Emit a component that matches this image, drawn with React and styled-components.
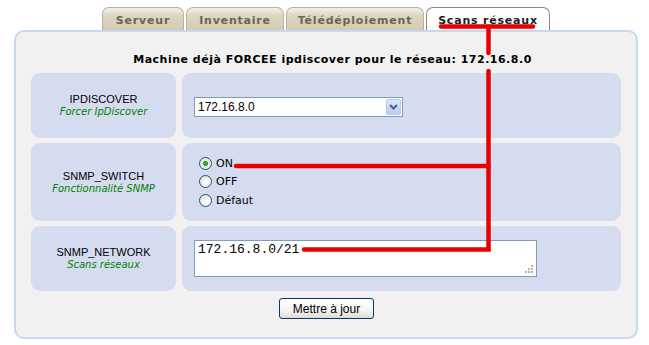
import styled, { createGlobalStyle } from 'styled-components'

const GlobalStyle = createGlobalStyle`
  html, body {
    margin: 0;
    padding: 0;
    background: #ffffff;
  }
  body {
    font-family: "Liberation Sans", Arial, sans-serif;
  }
`

const Page = styled.div`
  position: relative;
  width: 624px;
  padding: 7px 0 0 14px;
`

const Tabs = styled.div`
  display: flex;
  justify-content: center;
  gap: 2px;
  height: 23px;
`

const Tab = styled.div`
  display: flex;
  align-items: center;
  justify-content: center;
  width: ${(p) => p.$w}px;
  box-sizing: border-box;
  border: 1px solid ${(p) => (p.$active ? '#8f8a7c' : '#b9b29c')};
  border-bottom: none;
  border-radius: 7px 7px 0 0;
  background: ${(p) =>
    p.$active
      ? 'linear-gradient(#ffffff, #fbfbf9)'
      : 'linear-gradient(#f3f0e6 0%, #dcd6c2 35%, #d3cbb2 100%)'};
  color: ${(p) => (p.$active ? '#1e1e1e' : '#6d6552')};
  font-family: "DejaVu Sans", Verdana, sans-serif;
  font-weight: bold;
  font-size: 11px;
  letter-spacing: 0.8px;
  padding-top: 2px;
`

const Panel = styled.div`
  border: 2px solid #c8d7f2;
  border-radius: 10px;
  background: #f1f1f1;
  padding: 0 15px 18px;
`

const Title = styled.div`
  margin: 20px 0 5px;
  padding-left: 13px;
  height: 16px;
  line-height: 16px;
  text-align: center;
  font-family: "DejaVu Sans", Verdana, sans-serif;
  font-weight: bold;
  font-size: 11px;
  letter-spacing: 0.5px;
  color: #000;
`

const Grid = styled.div`
  display: grid;
  grid-template-columns: 145px 1fr;
  grid-template-rows: 65px 78px 65px;
  gap: 5px 6px;
`

const Cell = styled.div`
  background: #d6dcf0;
  border-radius: 9px;
  display: flex;
  flex-direction: column;
  justify-content: center;
`

const LabelCell = styled(Cell)`
  align-items: center;
  text-align: center;
`

const FieldCell = styled(Cell)`
  padding-left: 12px;
  align-items: flex-start;
`

const Name = styled.div`
  font-family: "Liberation Sans", Arial, sans-serif;
  font-size: 11px;
  line-height: 13px;
  color: #000;
`

const Hint = styled.div`
  font-family: "DejaVu Sans", Verdana, sans-serif;
  font-style: italic;
  font-size: 10px;
  line-height: 12px;
  color: #008000;
`

const SelectWrap = styled.div`
  position: relative;
  width: 209px;
  height: 20px;
  margin-top: 2px;
`

const Select = styled.select`
  appearance: none;
  width: 100%;
  height: 100%;
  box-sizing: border-box;
  border: 1px solid #7f9db9;
  border-radius: 0;
  background: #fff;
  padding: 0 0 0 3px;
  font-family: "Liberation Sans", Arial, sans-serif;
  font-size: 12px;
  color: #000;
  outline: none;
`

const DropButton = styled.div`
  position: absolute;
  top: 2px;
  right: 2px;
  width: 15px;
  height: 16px;
  box-sizing: border-box;
  border: 1px solid #b7c8ef;
  border-radius: 2px;
  background: linear-gradient(#dbe5fd, #b8cbf6);
  display: flex;
  align-items: center;
  justify-content: center;
  pointer-events: none;
`

const RadioList = styled.div`
  display: flex;
  flex-direction: column;
  margin: -1px 0 0 5px;
`

const RadioRow = styled.label`
  display: flex;
  align-items: center;
  gap: 4px;
  height: 18.5px;
  font-family: "DejaVu Sans", Verdana, sans-serif;
  font-size: 11px;
  color: #000;
`

const RadioDot = styled.span`
  display: inline-block;
  width: 13px;
  height: 13px;
  box-sizing: border-box;
  border-radius: 50%;
  border: 1px solid #1c5180;
  background: ${(p) =>
    p.$checked
      ? 'radial-gradient(circle at 50% 50%, #3fbd3a 0, #21a121 2.2px, #e6e6e0 2.8px, #f7f7f4 100%)'
      : 'radial-gradient(circle at 65% 65%, #ffffff 0, #f4f4ef 40%, #d8d8d0 100%)'};
`

const AreaWrap = styled.div`
  position: relative;
  width: 343px;
  height: 37px;
  margin-top: -1px;
`

const TextArea = styled.textarea`
  width: 100%;
  height: 100%;
  box-sizing: border-box;
  border: 1px solid #7f9db9;
  background: #fff;
  padding: 1px 3px;
  resize: none;
  font-family: "Liberation Mono", "Courier New", monospace;
  font-size: 13px;
  line-height: 15px;
  color: #000;
  outline: none;
`

const Grip = styled.svg`
  position: absolute;
  right: 4px;
  bottom: 4px;
`

const Actions = styled.div`
  display: flex;
  justify-content: center;
  margin-top: 7px;
  padding-left: 1px;
`

const Button = styled.button`
  width: 95px;
  height: 21px;
  box-sizing: border-box;
  border: 1px solid #003c74;
  border-radius: 3px;
  background: linear-gradient(#ffffff 0%, #f4f4f0 60%, #dedcd2 100%);
  font-family: "Liberation Sans", Arial, sans-serif;
  font-size: 12px;
  color: #000;
  padding: 0;
`

const Marks = styled.svg`
  position: absolute;
  left: 0;
  top: 0;
  pointer-events: none;
`

export default function App() {
  return (
    <>
      <GlobalStyle />
      <Page>
        <Tabs>
          <Tab $w={82}>Serveur</Tab>
          <Tab $w={98}>Inventaire</Tab>
          <Tab $w={138}>Télédéploiement</Tab>
          <Tab $w={124} $active>Scans réseaux</Tab>
        </Tabs>
        <Panel>
          <Title>Machine déjà FORCEE ipdiscover pour le réseau: 172.16.8.0</Title>
          <Grid>
            <LabelCell>
              <Name>IPDISCOVER</Name>
              <Hint>Forcer IpDiscover</Hint>
            </LabelCell>
            <FieldCell>
              <SelectWrap>
                <Select defaultValue="172.16.8.0">
                  <option>172.16.8.0</option>
                </Select>
                <DropButton>
                  <svg width="9" height="6" viewBox="0 0 9 6">
                    <path d="M1 1 L4.5 4.5 L8 1" fill="none" stroke="#4d6185" strokeWidth="2" />
                  </svg>
                </DropButton>
              </SelectWrap>
            </FieldCell>

            <LabelCell>
              <Name>SNMP_SWITCH</Name>
              <Hint>Fonctionnalité SNMP</Hint>
            </LabelCell>
            <FieldCell>
              <RadioList>
                <RadioRow><RadioDot $checked />ON</RadioRow>
                <RadioRow><RadioDot />OFF</RadioRow>
                <RadioRow><RadioDot />Défaut</RadioRow>
              </RadioList>
            </FieldCell>

            <LabelCell>
              <Name>SNMP_NETWORK</Name>
              <Hint>Scans réseaux</Hint>
            </LabelCell>
            <FieldCell>
              <AreaWrap>
                <TextArea defaultValue="172.16.8.0/21" />
                <Grip width="9" height="9" viewBox="0 0 9 9">
                  <g fill="#b8b4a8">
                    <rect x="7" y="1" width="2" height="2" />
                    <rect x="4" y="4" width="2" height="2" />
                    <rect x="7" y="4" width="2" height="2" />
                    <rect x="1" y="7" width="2" height="2" />
                    <rect x="4" y="7" width="2" height="2" />
                    <rect x="7" y="7" width="2" height="2" />
                  </g>
                </Grip>
              </AreaWrap>
            </FieldCell>
          </Grid>
          <Actions>
            <Button type="button">Mettre à jour</Button>
          </Actions>
        </Panel>
        <Marks width="649" height="345" viewBox="0 0 649 345">
          <g fill="none" stroke="#e60000" strokeWidth="4.5" strokeLinecap="round" strokeLinejoin="miter">
            <path d="M441 26.5 H533" />
            <path d="M488.5 27 V53" />
            <path d="M488.5 71 V249.5 H304" />
            <path d="M488.5 166 H236" />
          </g>
        </Marks>
      </Page>
    </>
  )
}
